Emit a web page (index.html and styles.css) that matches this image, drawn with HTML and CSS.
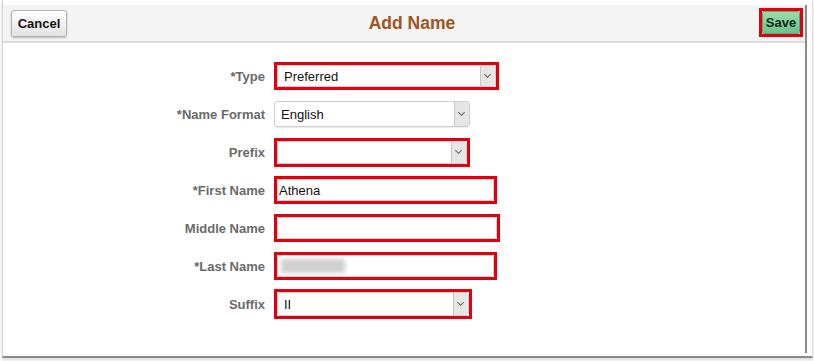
FILE: index.html
```html
<!DOCTYPE html>
<html lang="en">
<head>
    <meta charset="UTF-8">
    <title>Add Name</title>
    <link rel="stylesheet" href="styles.css">
</head>
<body>
    <div class="frame">
        <div class="page">
            <!-- Header bar -->
            <div class="header">
                <button class="btn btn-cancel">Cancel</button>
                <h1 class="title">Add Name</h1>
                <span class="mark mark-save"><button class="btn btn-save">Save</button></span>
            </div>

            <!-- Form -->
            <div class="form">
                <div class="row">
                    <label class="label">*Type</label>
                    <span class="mark w-type">
                        <span class="select"><span class="value">Preferred</span><span class="arrow"></span></span>
                    </span>
                </div>
                <div class="row">
                    <label class="label">*Name Format</label>
                    <span class="plain w-format">
                        <span class="select"><span class="value">English</span><span class="arrow"></span></span>
                    </span>
                </div>
                <div class="row">
                    <label class="label">Prefix</label>
                    <span class="mark w-prefix">
                        <span class="select"><span class="value"></span><span class="arrow"></span></span>
                    </span>
                </div>
                <div class="row">
                    <label class="label">*First Name</label>
                    <span class="mark w-first">
                        <span class="input"><span class="value tight">Athena</span></span>
                    </span>
                </div>
                <div class="row">
                    <label class="label">Middle Name</label>
                    <span class="mark w-middle">
                        <span class="input"></span>
                    </span>
                </div>
                <div class="row">
                    <label class="label">*Last Name</label>
                    <span class="mark w-last">
                        <span class="input"><span class="blur"></span></span>
                    </span>
                </div>
                <div class="row">
                    <label class="label">Suffix</label>
                    <span class="mark w-suffix">
                        <span class="select"><span class="value">II</span><span class="arrow"></span></span>
                    </span>
                </div>
            </div>
        </div>
    </div>
</body>
</html>
```

FILE: styles.css
```css
* {
    margin: 0;
    padding: 0;
    box-sizing: border-box;
    font-family: 'Liberation Sans', Arial, sans-serif;
}

body {
    background-color: #fff;
    width: 814px;
    height: 361px;
    overflow: hidden;
}

/* Outer screenshot frame */
.frame {
    margin-left: 2px;
    width: 811px;
    height: 358px;
    border-left: 1px solid #d4d4d4;
    border-right: 1px solid #e2e2e2;
    border-bottom: 2px solid #8a8a8a;
    box-shadow: 0 2px 3px rgba(0, 0, 0, 0.15);
    padding-top: 5px;
}

.page {
    width: 804px;
    height: 348px;
    border-right: 2px solid #8c8c8c;
}

/* Header */
.header {
    display: flex;
    align-items: center;
    justify-content: space-between;
    height: 38px;
    background-color: #f4f4f4;
    border-bottom: 2px solid #dcdcdc;
    padding: 0 2px 0 8px;
}

.title {
    font-size: 17.5px;
    font-weight: bold;
    color: #a0541e;
    margin-left: -2px;
}

.btn {
    font-size: 13px;
    font-weight: bold;
    color: #111;
    border-radius: 3px;
    cursor: pointer;
}

.btn-cancel {
    width: 56px;
    height: 27px;
    background: linear-gradient(#ffffff, #e3e3e3);
    border: 1px solid #b4b4b4;
    box-shadow: 0 1px 2px rgba(0, 0, 0, 0.25);
}

.btn-save {
    display: block;
    width: 38px;
    height: 23px;
    background: linear-gradient(#9bdcab, #6cc189);
    border: 1px solid #5aa874;
    border-radius: 2px;
    color: #0c2a16;
}

/* Red highlight boxes */
.mark {
    display: block;
    border: 3px solid #e2000f;
}

.mark-save {
    margin-top: -2px;
}

.plain {
    display: block;
}

.w-type { width: 225px; height: 28px; }
.w-format { width: 196px; height: 26px; }
.w-prefix { width: 196px; height: 29px; }
.w-first { width: 223px; height: 28px; }
.w-middle { width: 226px; height: 28px; }
.w-last { width: 223px; height: 28px; }
.w-suffix { width: 198px; height: 30px; }

/* Form rows */
.form {
    padding-top: 14px;
}

.row {
    display: flex;
    align-items: center;
    height: 38px;
    gap: 9px;
}

.label {
    width: 262px;
    text-align: right;
    font-size: 13px;
    font-weight: bold;
    color: #6a6a6a;
}

.select,
.input {
    display: flex;
    align-items: center;
    width: 100%;
    height: 100%;
    background-color: #fff;
    border: 1px solid #cfcfcf;
    border-radius: 3px;
}

.plain .select {
    box-shadow: 0 1px 1px rgba(0, 0, 0, 0.08);
}

.value {
    flex: 1;
    font-size: 13px;
    color: #111;
    padding-left: 6px;
}

.value.tight {
    padding-left: 1px;
}

.arrow {
    position: relative;
    width: 15px;
    height: 100%;
    background-color: #e6e6e6;
    border-left: 1px solid #c8c8c8;
}

.arrow::after {
    content: '';
    position: absolute;
    left: 4px;
    top: 50%;
    width: 4px;
    height: 4px;
    margin-top: -4px;
    border-right: 1px solid #666;
    border-bottom: 1px solid #666;
    transform: rotate(45deg);
}

.blur {
    display: block;
    width: 64px;
    height: 14px;
    margin-left: 3px;
    background-color: #d0d0d0;
    filter: blur(2px);
}
```
